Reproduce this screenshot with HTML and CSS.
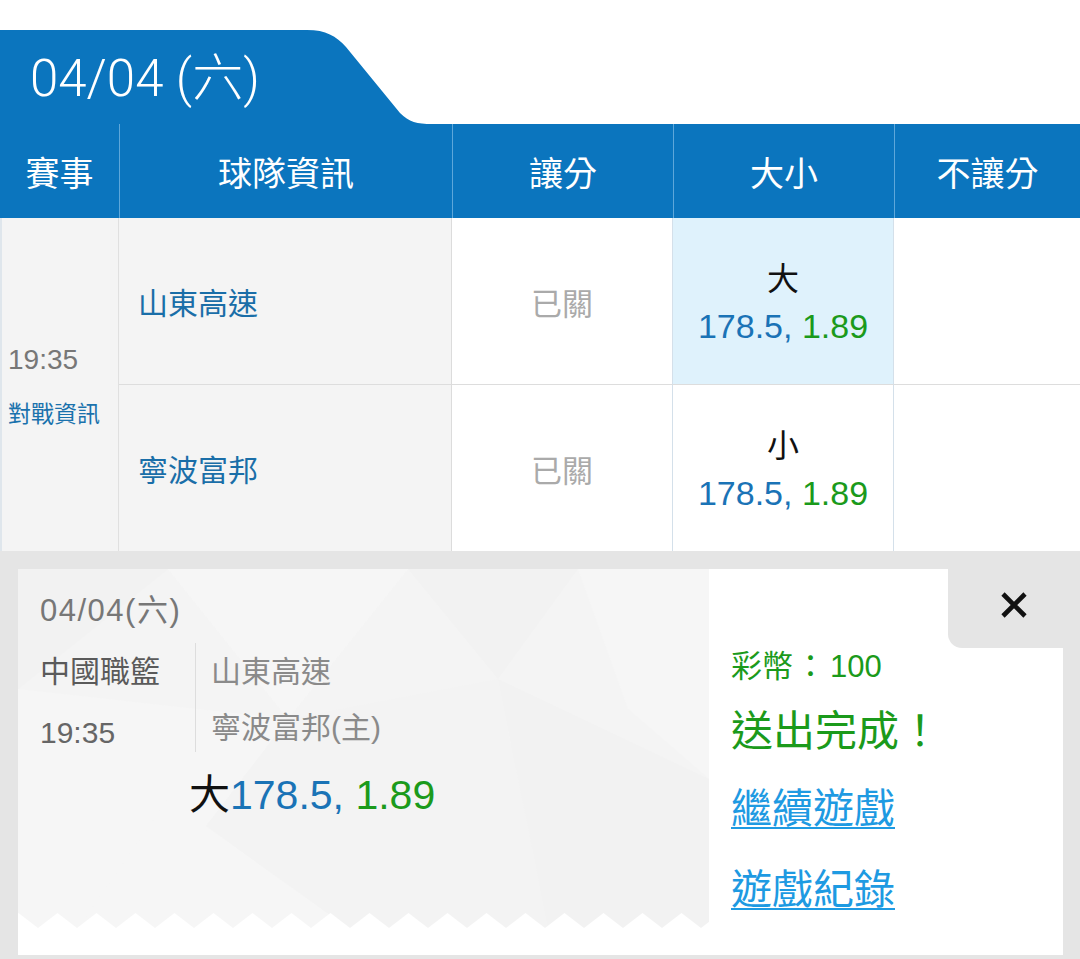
FILE: index.html
```html
<!DOCTYPE html>
<html lang="zh-Hant">
<head>
<meta charset="utf-8">
<title>04/04 (六)</title>
<link rel="stylesheet" href="styles.css">
</head>
<body>
<div class="page">
  <div class="tab">04/04 (六)</div>
  <div class="thead">
    <div class="th">賽事</div>
    <div class="th">球隊資訊</div>
    <div class="th">讓分</div>
    <div class="th">大小</div>
    <div class="th">不讓分</div>
  </div>
  <div class="tbody">
    <div class="time-cell">
      <div class="time">19:35</div>
      <a class="vs">對戰資訊</a>
    </div>
    <div class="team row1">山東高速</div>
    <div class="closed row1">已關</div>
    <div class="ou row1 sel">
      <div class="ou-label">大</div>
      <div class="odds"><span class="line">178.5,</span> <span class="price">1.89</span></div>
    </div>
    <div class="empty row1"></div>
    <div class="team">寧波富邦</div>
    <div class="closed">已關</div>
    <div class="ou">
      <div class="ou-label">小</div>
      <div class="odds"><span class="line">178.5,</span> <span class="price">1.89</span></div>
    </div>
    <div class="empty"></div>
  </div>
  <div class="panel">
    <div class="ticket">
      <div class="ticket-left">
        <div class="t-date">04/04(六)</div>
        <div class="t-info">
          <div class="t-league">
            <div class="t-line">中國職籃</div>
            <div class="t-line t-time">19:35</div>
          </div>
          <div class="t-teams">
            <div class="t-line">山東高速</div>
            <div class="t-line t-home">寧波富邦(主)</div>
          </div>
        </div>
        <div class="t-pick">大<span class="line">178.5,</span> <span class="price">1.89</span></div>
      </div>
      <div class="ticket-right">
        <div class="close">
          <svg width="28" height="28" viewBox="0 0 28 28" aria-hidden="true">
            <path d="M3 3 L25 25 M25 3 L3 25" stroke="#111" stroke-width="4.6" stroke-linecap="butt" fill="none"/>
          </svg>
        </div>
        <div class="result">
          <div class="coins">彩幣<span class="colon">：</span>100</div>
          <div class="done">送出完成！</div>
          <a class="link first">繼續遊戲</a>
          <a class="link">遊戲紀錄</a>
        </div>
      </div>
    </div>
  </div>
</div>
</body>
</html>
```

FILE: styles.css
```css
html, body {
  margin: 0;
  padding: 0;
  background: #ffffff;
}

body {
  font-family: "Liberation Sans", "Noto Sans CJK TC", sans-serif;
  color: #222;
}

.page {
  width: 1080px;
  padding-top: 30px;
}

.tab {
  box-sizing: border-box;
  width: 432px;
  height: 94px;
  padding-left: 30px;
  padding-bottom: 6px;
  display: flex;
  align-items: center;
  background: #0b75be;
  color: #ffffff;
  font-family: "Roboto", "Noto Sans CJK TC", sans-serif;
  font-weight: 300;
  font-size: 51px;
  clip-path: path('M0 0 H307 C326 0 336 6 346 17 L400 83 C409 92 417 94 432 94 L0 94 Z');
}

.thead {
  display: grid;
  grid-template-columns: 119px 333px 221px 221px 186px;
  height: 94px;
  background: #0b75be;
}

.th {
  display: flex;
  align-items: center;
  justify-content: center;
  color: #ffffff;
  font-family: "Noto Sans CJK TC", sans-serif;
  font-size: 34px;
}

.th + .th {
  border-left: 1px solid #5ea7da;
}

.tbody {
  display: grid;
  grid-template-columns: 119px 333px 221px 221px 186px;
  grid-template-rows: 167px 166px;
}

.time-cell {
  grid-row: 1 / 3;
  box-sizing: border-box;
  padding: 125px 0 0 6px;
  background: #f4f4f4;
  border-left: 2px solid #dfe6ec;
  border-right: 1px solid #e0e0e0;
  display: flex;
  flex-direction: column;
}

.time {
  font-size: 28px;
  line-height: 34px;
  color: #777777;
}

.vs {
  margin-top: 22px;
  font-family: "Noto Sans CJK TC", sans-serif;
  font-weight: 400;
  font-size: 23px;
  line-height: 26px;
  color: #1a72ad;
}

.team {
  display: flex;
  align-items: center;
  padding-left: 19px;
  background: #f4f4f4;
  border-right: 1px solid #dcdcdc;
  font-family: "Noto Sans CJK TC", sans-serif;
  font-size: 30px;
  color: #1a6ea8;
}

.closed {
  display: flex;
  align-items: center;
  justify-content: center;
  background: #ffffff;
  border-right: 1px solid #d4e0ea;
  font-family: "Noto Sans CJK TC", sans-serif;
  font-size: 31px;
  color: #aaaaaa;
}

.ou {
  display: flex;
  flex-direction: column;
  align-items: center;
  justify-content: center;
  background: #ffffff;
  border-right: 1px solid #d4e0ea;
}

.ou.sel {
  background: #dff2fc;
}

.ou-label {
  font-family: "Noto Sans CJK TC", sans-serif;
  font-size: 32px;
  line-height: 50px;
  color: #111111;
}

.odds {
  font-size: 34px;
  line-height: 50px;
}

.line {
  color: #1a73b6;
}

.price {
  color: #1b9a1b;
}

.empty {
  background: #ffffff;
}

.row1 {
  border-bottom: 1px solid #dddddd;
}

.panel {
  background: #e5e5e5;
  padding: 18px 17px 4px 18px;
}

.ticket {
  display: flex;
  align-items: flex-start;
  height: 386px;
  background: #ffffff;
}

.ticket-left {
  box-sizing: border-box;
  width: 691px;
  height: 359px;
  padding: 23px 0 0 22px;
  background-color: #f4f4f4;
  background-image:
    url("data:image/svg+xml;utf8,<svg xmlns='http://www.w3.org/2000/svg' width='39' height='15'><polygon points='0,15 19.5,0 39,15' fill='white'/></svg>"),
    url("data:image/svg+xml;utf8,<svg xmlns='http://www.w3.org/2000/svg' width='691' height='359' viewBox='0 0 691 359'><rect width='691' height='359' fill='%23f4f4f4'/><polygon points='0,0 150,0 0,120' fill='%23f2f2f2'/><polygon points='150,0 390,0 270,150' fill='%23f6f6f6'/><polygon points='390,0 560,0 480,110' fill='%23f2f2f2'/><polygon points='560,0 691,0 691,210 610,140' fill='%23f6f6f6'/><polygon points='0,120 270,150 110,359 0,359' fill='%23f6f6f6'/><polygon points='270,150 480,110 530,359 110,359' fill='%23f3f3f3'/><polygon points='480,110 691,210 691,359 530,359' fill='%23f2f2f2'/><polygon points='150,230 330,359 60,359' fill='%23f6f6f6'/></svg>");
  background-repeat: repeat-x, no-repeat;
  background-position: 19.5px 100%, 0 0;
  background-size: 39px 15px, 691px 359px;
}

.t-date {
  font-size: 31px;
  line-height: 38px;
  letter-spacing: 1.5px;
  color: #777777;
}

.t-info {
  display: flex;
  margin-top: 13px;
}

.t-league {
  width: 155px;
  padding-top: 11px;
}

.t-teams {
  border-left: 1px solid #dddddd;
  padding: 11px 0 6px 15px;
}

.t-line {
  font-size: 30px;
  line-height: 36px;
  color: #5a5a5a;
}

.t-time {
  margin-top: 25px;
  color: #666666;
}

.t-teams .t-line {
  color: #8a8a8a;
}

.t-teams .t-home {
  margin-top: 20px;
}

.t-pick {
  margin-top: 19px;
  padding-left: 149px;
  font-size: 41px;
  line-height: 48px;
  color: #111111;
}

.ticket-right {
  flex: 1;
  display: flex;
  flex-direction: column;
}

.close {
  align-self: flex-end;
  width: 115px;
  height: 79px;
  display: flex;
  align-items: center;
  justify-content: flex-end;
  padding: 0 35px 8px 0;
  box-sizing: border-box;
  background: #e5e5e5;
  border-bottom-left-radius: 14px;
}

.result {
  display: flex;
  flex-direction: column;
  align-items: flex-start;
  padding-left: 22px;
  font-family: "Noto Sans CJK TC", sans-serif;
}

.coins {
  font-family: "Liberation Sans", "Noto Sans CJK TC", sans-serif;
  font-size: 31px;
  line-height: 38px;
  color: #1b9a1b;
}

.colon {
  padding: 0 4px 0 2px;
}

.done {
  margin-top: 17px;
  font-size: 42px;
  line-height: 50px;
  color: #1b9a1b;
}

.link {
  font-size: 41px;
  line-height: 50px;
  color: #1e9ae2;
  text-decoration: underline;
  text-decoration-thickness: 2px;
  text-underline-offset: 4px;
  margin-top: 31px;
}

.link.first {
  margin-top: 27px;
}
```
